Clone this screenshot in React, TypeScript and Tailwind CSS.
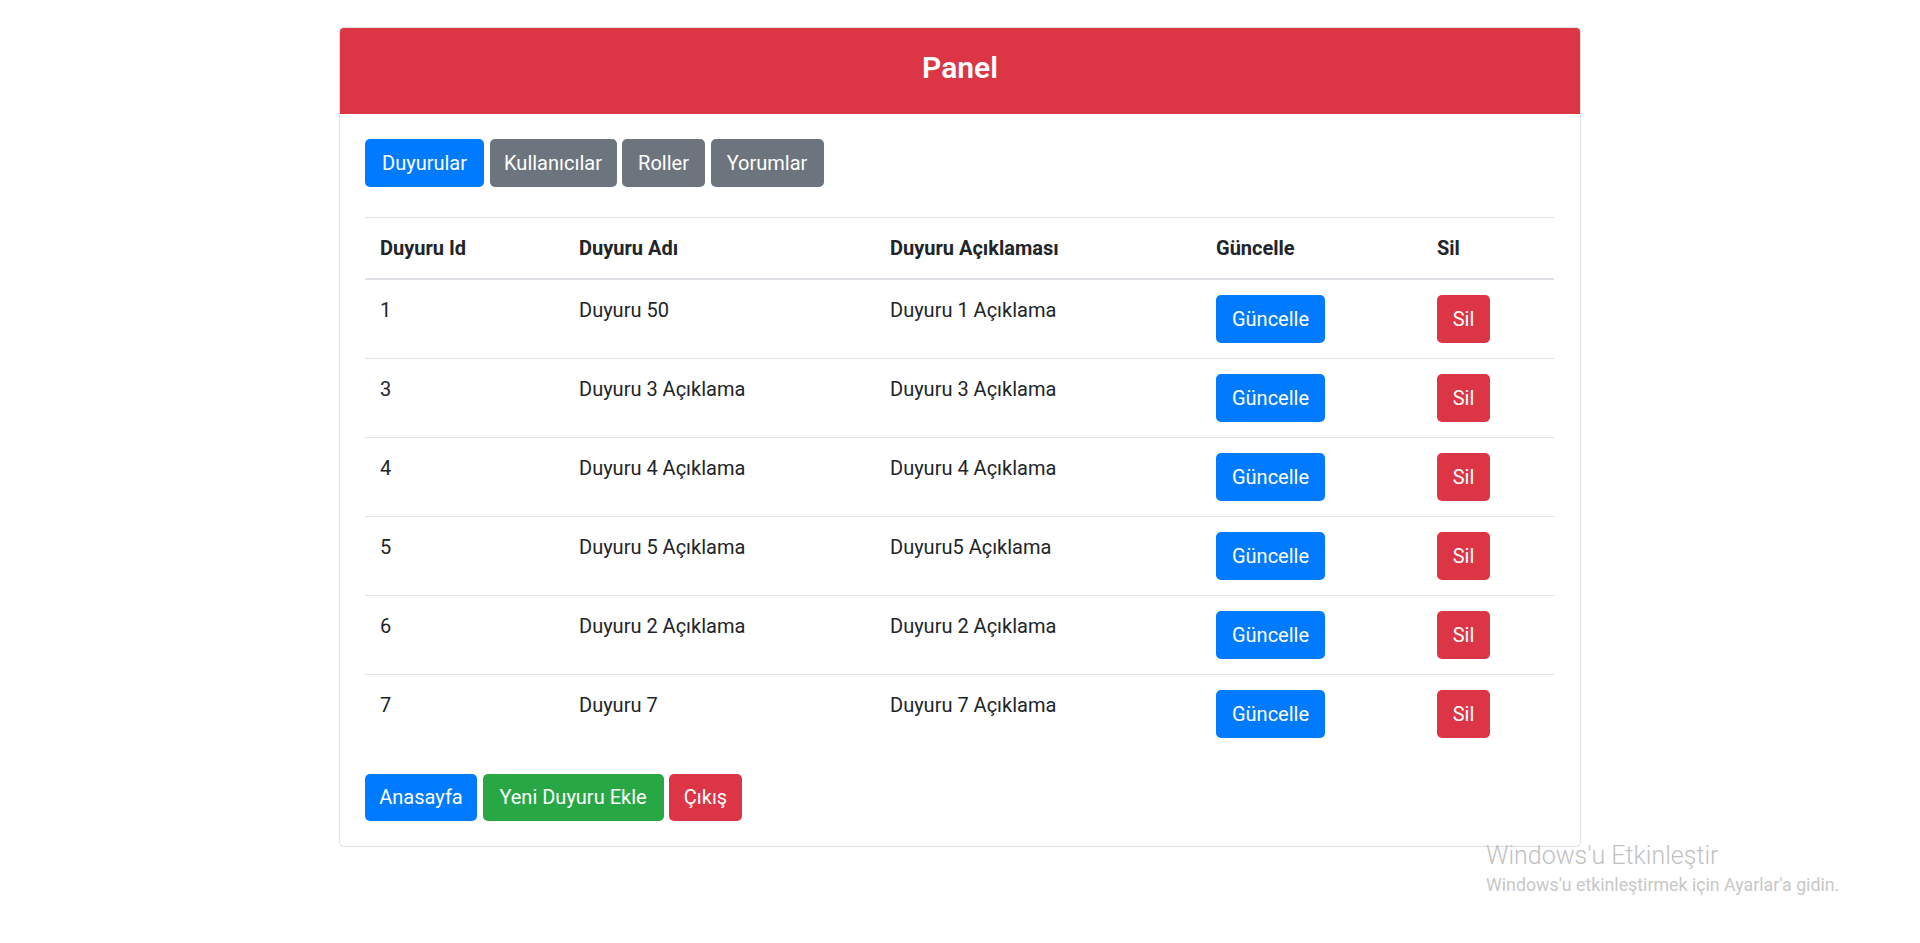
import React from 'react';

interface Duyuru {
  id: number;
  adi: string;
  aciklama: string;
}

const duyurular: Duyuru[] = [
  { id: 1, adi: 'Duyuru 50', aciklama: 'Duyuru 1 Açıklama' },
  { id: 3, adi: 'Duyuru 3 Açıklama', aciklama: 'Duyuru 3 Açıklama' },
  { id: 4, adi: 'Duyuru 4 Açıklama', aciklama: 'Duyuru 4 Açıklama' },
  { id: 5, adi: 'Duyuru 5 Açıklama', aciklama: 'Duyuru5 Açıklama' },
  { id: 6, adi: 'Duyuru 2 Açıklama', aciklama: 'Duyuru 2 Açıklama' },
  { id: 7, adi: 'Duyuru 7', aciklama: 'Duyuru 7 Açıklama' },
];

const btn = 'h-[47.5px] flex items-center justify-center rounded-[5px] text-white text-[20px] leading-[30px]';
const rowBtn = 'h-[48px] flex items-center justify-center rounded-[5px] text-white text-[20px] leading-[30px]';

export default function App() {
  return (
    <div className="relative w-full min-h-[943px] bg-white font-['Roboto','Segoe_UI',sans-serif] text-[#212529]">
      <div className="pt-[27px]">
        {/* Card */}
        <div className="mx-auto w-[1242px] border border-black/[0.125] rounded-[5px] overflow-hidden">
          <div className="h-[86px] bg-[#dc3545] flex items-center justify-center pb-[6px]">
            <h3 className="text-white text-[30px] font-semibold leading-[36px]">Panel</h3>
          </div>

          <div className="p-[25px]">
            {/* Nav buttons */}
            <div className="flex gap-[5.5px]">
              <button className={`${btn} w-[119px] bg-[#007bff]`}>Duyurular</button>
              <button className={`${btn} w-[127px] bg-[#6c757d]`}>Kullanıcılar</button>
              <button className={`${btn} w-[83px] bg-[#6c757d]`}>Roller</button>
              <button className={`${btn} w-[113px] bg-[#6c757d]`}>Yorumlar</button>
            </div>

            {/* Table */}
            <table className="mt-[30.5px] w-[1189px] table-fixed border-collapse text-[20px] leading-[30px]">
              <colgroup>
                <col className="w-[199px]" />
                <col className="w-[311px]" />
                <col className="w-[326px]" />
                <col className="w-[221px]" />
                <col className="w-[132px]" />
              </colgroup>
              <thead>
                <tr className="border-t border-[#dee2e6] border-b-2">
                  <th className="p-[15px] text-left font-bold align-bottom">Duyuru Id</th>
                  <th className="p-[15px] text-left font-bold align-bottom">Duyuru Adı</th>
                  <th className="p-[15px] text-left font-bold align-bottom">Duyuru Açıklaması</th>
                  <th className="p-[15px] text-left font-bold align-bottom">Güncelle</th>
                  <th className="p-[15px] text-left font-bold align-bottom">Sil</th>
                </tr>
              </thead>
              <tbody>
                {duyurular.map(d => (
                  <tr key={d.id} className="border-t border-[#dee2e6]">
                    <td className="p-[15px] align-top">{d.id}</td>
                    <td className="p-[15px] align-top">{d.adi}</td>
                    <td className="p-[15px] align-top">{d.aciklama}</td>
                    <td className="p-[15px] align-top">
                      <button className={`${rowBtn} w-[109px] bg-[#007bff]`}>Güncelle</button>
                    </td>
                    <td className="p-[15px] align-top">
                      <button className={`${rowBtn} w-[53px] bg-[#dc3545]`}>Sil</button>
                    </td>
                  </tr>
                ))}
              </tbody>
            </table>

            {/* Footer buttons */}
            <div className="mt-[20.5px] flex gap-[5.5px]">
              <button className={`${btn} w-[112px] bg-[#007bff]`}>Anasayfa</button>
              <button className={`${btn} w-[181px] bg-[#28a745]`}>Yeni Duyuru Ekle</button>
              <button className={`${btn} w-[73px] bg-[#dc3545]`}>Çıkış</button>
            </div>
          </div>
        </div>
      </div>

      {/* Windows activation watermark */}
      <div className="absolute left-[1486px] top-[841px] pointer-events-none select-none">
        <div className="text-[25px] leading-[30px] font-light text-[#c2c2c2]">Windows'u Etkinleştir</div>
        <div className="text-[17.8px] leading-[27px] text-[#c8c8c8]">Windows'u etkinleştirmek için Ayarlar'a gidin.</div>
      </div>
    </div>
  );
}
